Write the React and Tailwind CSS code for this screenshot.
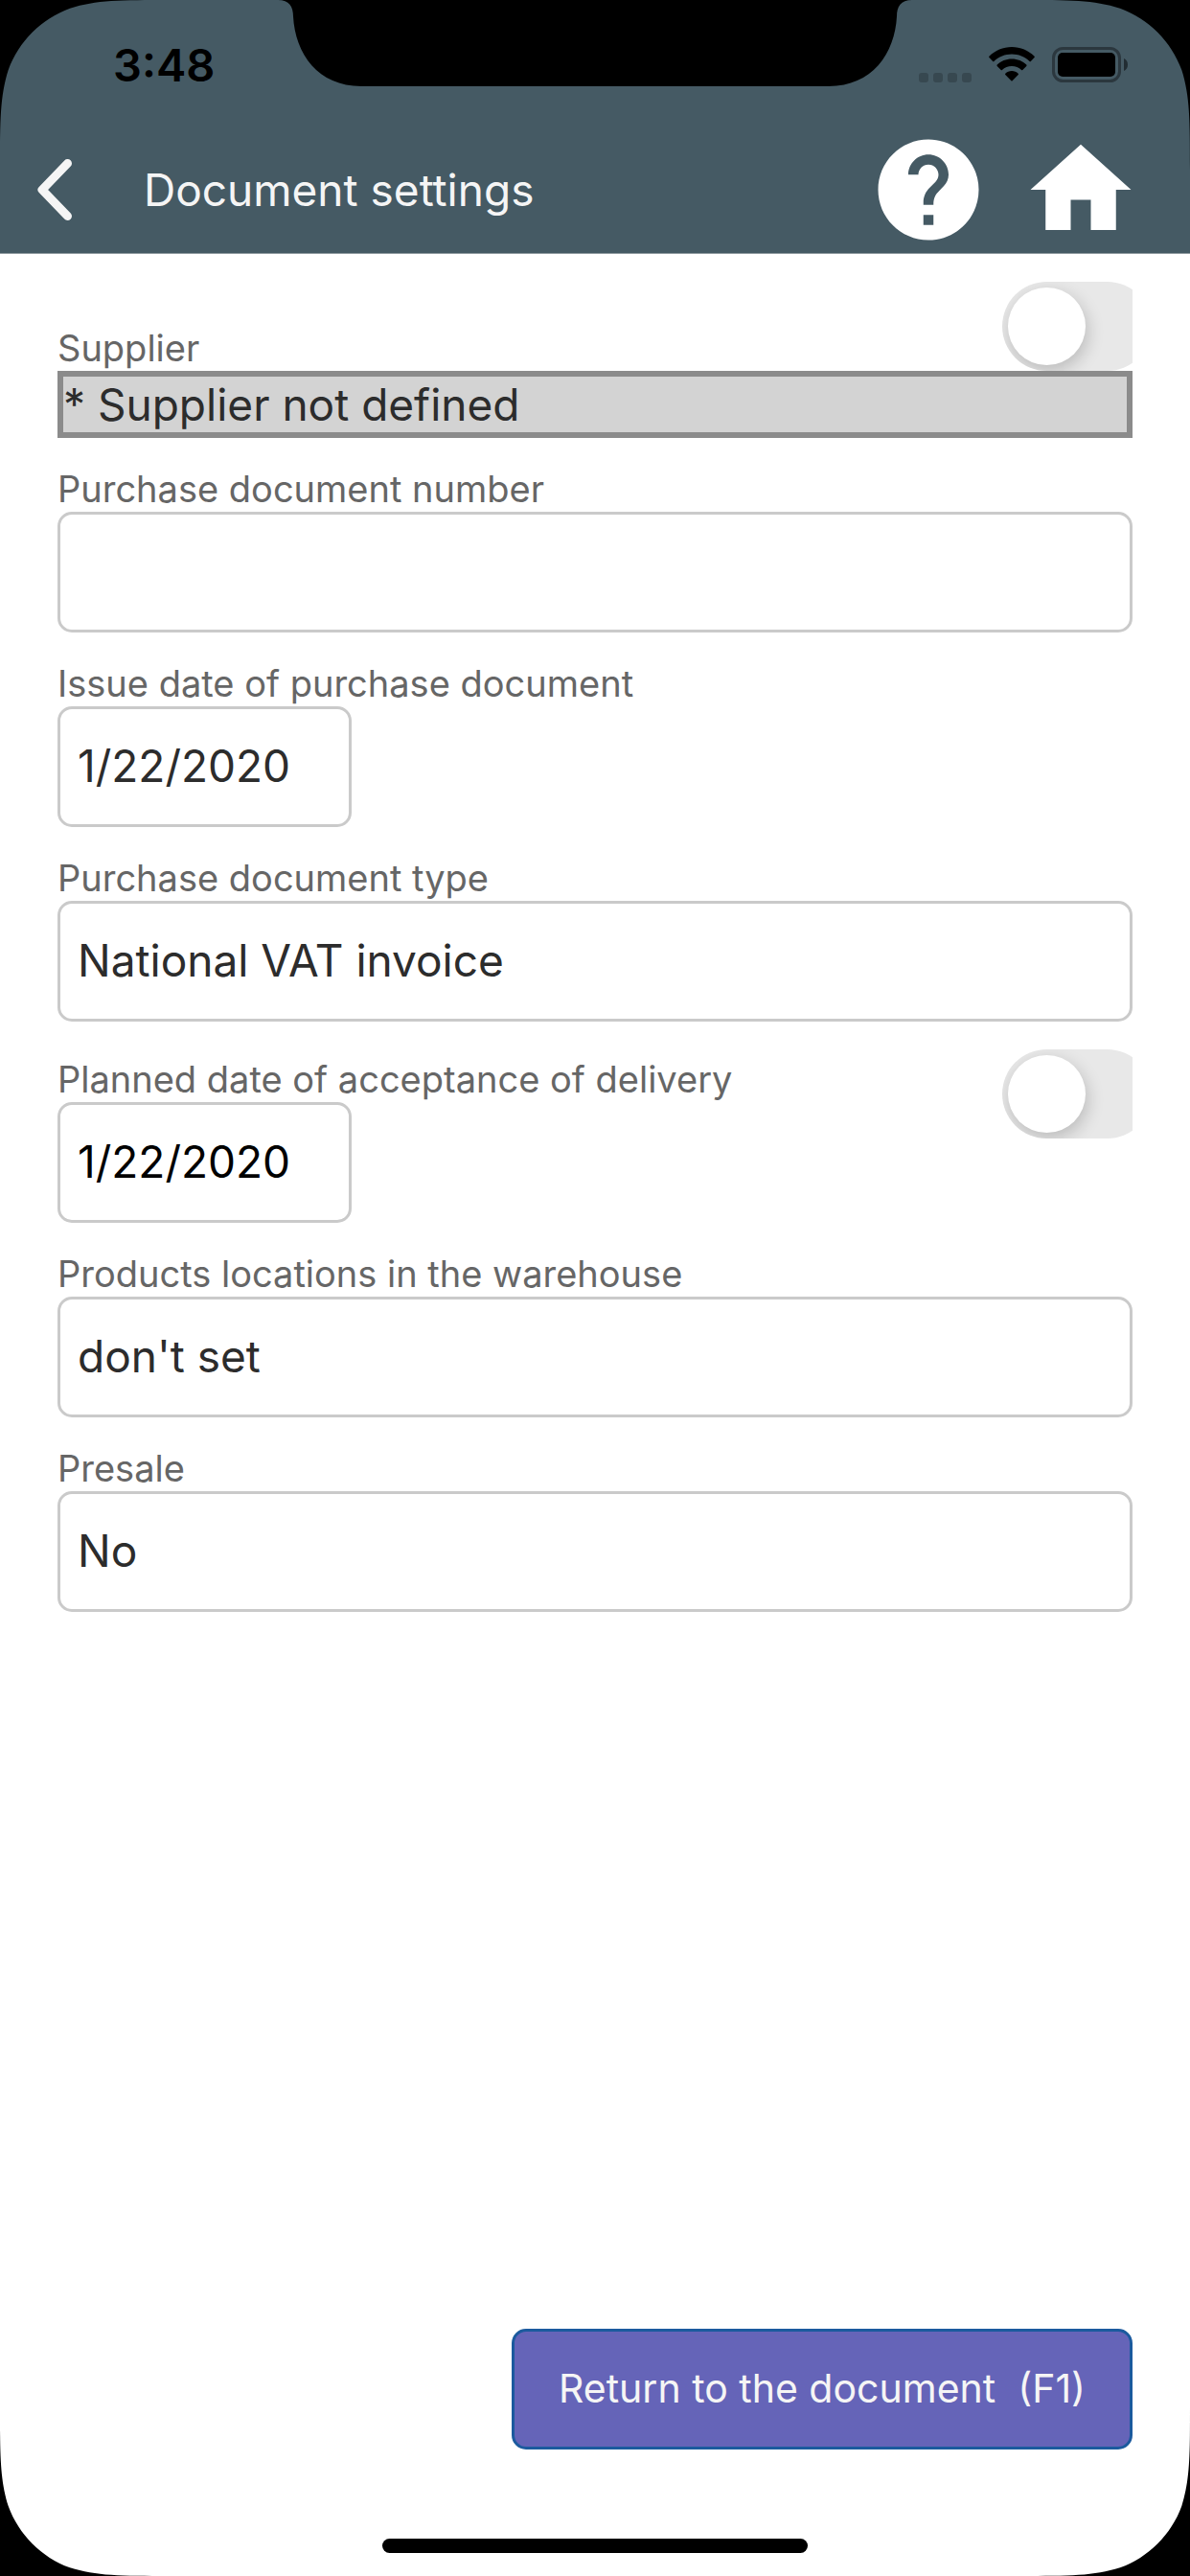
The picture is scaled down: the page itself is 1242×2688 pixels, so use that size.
import { useState } from "react";
import { MdHelp, MdHome } from "react-icons/md";

const fieldClass =
  "block h-[126px] appearance-none rounded-[15px] border-[3px] border-[#cacaca] bg-white px-[18px] pb-[2px] text-[46px] outline-none";

function Corner({ className }) {
  return (
    <svg
      className={`pointer-events-none absolute size-[177px] ${className}`}
      viewBox="0 0 153 153"
      aria-hidden="true"
    >
      <path d="M0 0H153C108.8 0 86.8 0 63.1 7.5C37.3 16.9 16.9 37.3 7.5 63.1C0 86.8 0 108.8 0 153Z" />
    </svg>
  );
}

function StatusBar() {
  return (
    <div className="flex h-[132px] items-start justify-between pt-[36px] pr-[65px] pl-[118px] text-black">
      <span className="text-[47px] leading-[64px] font-semibold">3:48</span>

      <div className="flex items-center gap-[18px] pt-[13px]">
        <div className="flex gap-[5px] self-end">
          <span className="size-[10px] rounded-[3px] bg-black/20" />
          <span className="size-[10px] rounded-[3px] bg-black/20" />
          <span className="size-[10px] rounded-[3px] bg-black/20" />
          <span className="size-[10px] rounded-[3px] bg-black/20" />
        </div>

        <svg className="h-[37px] w-[48px]" viewBox="0 0 48 37" aria-hidden="true">
          <path d="M24 0C33 0 41.500 3.700 47.600 9.700C48 10.100 48 10.700 47.600 11.100L43.800 15C43.400 15.400 43 15.300 42.600 15C37.600 10.200 31 7.500 24 7.500C17 7.500 10.400 10.200 5.400 15C5 15.300 4.600 15.400 4.200 15L0.400 11.100C0 10.700 0 10.100 0.400 9.700C6.500 3.700 15 0 24 0Z" />
          <path d="M24 12.500C30 12.500 35.300 14.800 39.300 18.600C39.700 19 39.700 19.500 39.300 19.900L35.300 23.900C34.900 24.300 34.500 24.300 34.100 23.900C31.400 21.500 27.900 20 24 20C20.100 20 16.600 21.500 13.900 23.900C13.500 24.300 13.100 24.300 12.700 23.900L8.700 19.900C8.300 19.500 8.300 19 8.700 18.600C12.700 14.800 18 12.500 24 12.500Z" />
          <path d="M24 25C26.600 25 28.900 26 30.700 27.700C31.100 28.100 31.100 28.500 30.700 28.900L24.600 35.300C24.200 35.700 23.800 35.700 23.400 35.300L17.300 28.900C16.900 28.500 16.900 28.100 17.300 27.700C19.100 26 21.400 25 24 25Z" />
        </svg>

        <svg className="h-[37px] w-[79px]" viewBox="0 0 79 37" aria-hidden="true">
          <rect x="1.500" y="1.500" width="69" height="34" rx="10" fill="none" stroke="#2b373e" strokeWidth="3" />
          <rect x="6" y="6" width="60" height="25" rx="5" />
          <path d="M75 12C77.500 13 79 15.500 79 18.500C79 21.500 77.500 24 75 25Z" fill="#222d33" />
        </svg>
      </div>
    </div>
  );
}

function Field({ id, label, children }) {
  return (
    <div>
      <label htmlFor={id} className="block text-[38px] leading-[48px] text-[#666666]">
        {label}
      </label>
      {children}
    </div>
  );
}

function Toggle({ label, checked, onChange }) {
  return (
    <div className="h-[93px] w-[136px] shrink-0 overflow-hidden">
      <input
        type="checkbox"
        role="switch"
        aria-label={label}
        checked={checked}
        onChange={(e) => onChange(e.target.checked)}
        className="block h-[93px] w-[156px] appearance-none overflow-hidden rounded-full bg-[#e8e8e8] p-[6px] before:block before:size-[81px] before:rounded-full before:bg-white before:shadow-[2px_6px_18px_rgba(0,0,0,0.2)] before:content-[''] checked:bg-[#6564b8] checked:before:ml-[63px]"
      />
    </div>
  );
}

export default function App() {
  const [supplierOn, setSupplierOn] = useState(false);
  const [deliveryOn, setDeliveryOn] = useState(false);
  const [documentNumber, setDocumentNumber] = useState("");
  const [issueDate, setIssueDate] = useState("1/22/2020");
  const [deliveryDate, setDeliveryDate] = useState("1/22/2020");

  return (
    <div className="relative flex min-h-screen flex-col overflow-hidden bg-white font-['Inter',sans-serif] text-[#2c2c2c]">
      <header className="border-b border-[#8f9a9f] bg-[#455a64]">
        <StatusBar />
        <nav className="flex h-[132px] items-center pr-[51px] pl-[39px]">
          <button type="button" aria-label="Back">
            <svg className="h-[64px] w-[36px]" viewBox="0 0 36 64" fill="none" aria-hidden="true">
              <path
                d="M31.500 4.500L5 32L31.500 59.500"
                stroke="#f5f5f5"
                strokeWidth="9"
                strokeLinecap="round"
                strokeLinejoin="round"
              />
            </svg>
          </button>
          <h1 className="ml-[75px] flex-1 text-[46px] text-[#f5f5f5]">Document settings</h1>
          <div className="flex gap-[33px] text-white">
            <button type="button" aria-label="Help">
              <MdHelp className="size-[126px]" />
            </button>
            <button type="button" aria-label="Home">
              <MdHome className="size-[126px]" />
            </button>
          </div>
        </nav>
      </header>

      <main className="flex flex-1 flex-col gap-[29px] px-[60px] pt-[29px]">
        {/* supplier */}
        <div>
          <div className="flex items-end justify-between">
            <label htmlFor="supplier" className="text-[38px] leading-[48px] text-[#666666]">
              Supplier
            </label>
            <Toggle label="Remember supplier" checked={supplierOn} onChange={setSupplierOn} />
          </div>
          <input
            id="supplier"
            type="text"
            readOnly
            value="* Supplier not defined"
            className="block h-[70px] w-full border-[6px] border-[#8b8b8b] bg-[#d3d3d3] text-[46px] outline-none"
          />
        </div>

        <Field id="number" label="Purchase document number">
          <input
            id="number"
            type="text"
            value={documentNumber}
            onChange={(e) => setDocumentNumber(e.target.value)}
            className={`${fieldClass} w-full`}
          />
        </Field>

        <Field id="issue-date" label="Issue date of purchase document">
          <input
            id="issue-date"
            type="text"
            value={issueDate}
            onChange={(e) => setIssueDate(e.target.value)}
            className={`${fieldClass} w-[307px]`}
          />
        </Field>

        <Field id="type" label="Purchase document type">
          <select id="type" className={`${fieldClass} w-full`}>
            <option>National VAT invoice</option>
          </select>
        </Field>

        {/* planned delivery */}
        <div className="flex items-start justify-between">
          <div className="pt-[7px]">
            <Field id="delivery-date" label="Planned date of acceptance of delivery">
              <input
                id="delivery-date"
                type="text"
                value={deliveryDate}
                onChange={(e) => setDeliveryDate(e.target.value)}
                className={`${fieldClass} w-[307px] text-black`}
              />
            </Field>
          </div>
          <Toggle label="Remember delivery date" checked={deliveryOn} onChange={setDeliveryOn} />
        </div>

        <Field id="locations" label="Products locations in the warehouse">
          <select id="locations" className={`${fieldClass} w-full`}>
            <option>don't set</option>
          </select>
        </Field>

        <Field id="presale" label="Presale">
          <select id="presale" className={`${fieldClass} w-full`}>
            <option>No</option>
          </select>
        </Field>
      </main>

      <footer className="flex justify-end px-[60px] pb-[132px]">
        <button
          type="button"
          className="h-[126px] min-w-[648px] rounded-[15px] border-[3px] border-[#1b5a9e] bg-[#6564b8] px-[42px] text-[41px] whitespace-pre text-[#f5f5f5]"
        >
          {"Return to the document  (F1)"}
        </button>
      </footer>

      {/* device frame */}
      <svg
        className="pointer-events-none absolute top-0 left-1/2 h-[90px] w-[662px] -translate-x-1/2"
        viewBox="0 0 662 90"
        aria-hidden="true"
      >
        <path d="M0 0C12 0 16 7 16 17C18 56 42 90 87 90H575C620 90 644 56 646 17C646 7 650 0 662 0Z" />
      </svg>
      <Corner className="top-0 left-0" />
      <Corner className="top-0 right-0 rotate-90" />
      <Corner className="right-0 bottom-0 rotate-180" />
      <Corner className="bottom-0 left-0 -rotate-90" />
      <div className="absolute bottom-6 left-1/2 h-[15px] w-[444px] -translate-x-1/2 rounded-full bg-black" />
    </div>
  );
}
